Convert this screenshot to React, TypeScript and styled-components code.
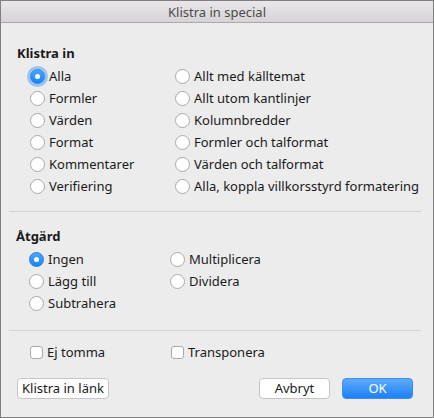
import React from "react";
import styled, { createGlobalStyle } from "styled-components";

const Global = createGlobalStyle`
  html, body { margin: 0; padding: 0; background: #ececec; }
  body { font-family: "Noto Sans", "Open Sans", "Liberation Sans", sans-serif; font-size: 13px; color: #1a1a1a; }
  * { box-sizing: border-box; }
`;

const Window = styled.div`
  width: 434px;
  height: 418px;
  border: 1px solid #7f7f7f;
  background: #ececec;
  display: flex;
  flex-direction: column;
`;

const TitleBar = styled.div`
  height: 22px;
  flex: none;
  border-bottom: 1px solid #a9a9a9;
  background: linear-gradient(#e9e7e9, #d5d3d5);
  display: flex;
  align-items: center;
  justify-content: center;
  color: #4a4a4a;
  font-size: 13px;
`;

const Body = styled.div`
  padding: 21px 12px 0 8px;
  display: flex;
  flex-direction: column;
`;

const Header = styled.div`
  font-weight: 700;
  font-size: 13px;
  line-height: 18px;
  padding-left: ${(p: { $indent: number }) => p.$indent}px;
`;

const Grid = styled.div<{ $left: number; $col: number }>`
  display: grid;
  grid-template-columns: ${(p) => p.$col}px 1fr;
  grid-auto-flow: column;
  padding-left: ${(p) => p.$left}px;
  margin-top: 3px;
`;

const Col = styled.div`
  display: flex;
  flex-direction: column;
`;

const Row = styled.label`
  height: 22px;
  display: flex;
  align-items: center;
  gap: 4px;
  white-space: nowrap;
`;

const Radio = styled.span<{ $on?: boolean; $focus?: boolean }>`
  width: 15px;
  height: 15px;
  border-radius: 50%;
  flex: none;
  display: flex;
  align-items: center;
  justify-content: center;
  background: ${(p) => (p.$on ? "linear-gradient(#4ea6fb, #1a84f6)" : "#fff")};
  border: 1px solid ${(p) => (p.$on ? "#1a7ef0" : "#a9a9a9")};
  box-shadow: ${(p) => (p.$focus ? "0 0 0 3px rgba(90,160,240,0.55)" : "none")};
  &::after {
    content: "";
    display: ${(p) => (p.$on ? "block" : "none")};
    width: 5px;
    height: 5px;
    border-radius: 50%;
    background: #fff;
  }
`;

const Separator = styled.div`
  height: 1px;
  background: #d3d3d3;
  margin: ${(p: { $top: number; $bottom: number }) => `${p.$top}px 0 ${p.$bottom}px 0`};
`;

const CheckGrid = styled.div`
  display: grid;
  grid-template-columns: 141px 1fr;
  padding-left: 21px;
`;

const Check = styled.span`
  width: 13px;
  height: 13px;
  border-radius: 3px;
  background: #fff;
  border: 1px solid #a9a9a9;
  flex: none;
`;

const Buttons = styled.div`
  display: flex;
  align-items: center;
  margin-top: 15px;
  padding-left: 8px;
  padding-right: 8px;
`;

const Button = styled.button<{ $primary?: boolean; $w: number }>`
  height: 21px;
  width: ${(p) => p.$w}px;
  padding: 0;
  font-family: inherit;
  font-size: 13px;
  border-radius: 4px;
  border: 1px solid ${(p) => (p.$primary ? "#3f8ff0" : "#c5c5c5")};
  background: ${(p) => (p.$primary ? "linear-gradient(#5eaafb, #1c80f6)" : "#fff")};
  color: ${(p) => (p.$primary ? "#fff" : "#1a1a1a")};
  line-height: 19px;
`;

const Spacer = styled.div`
  flex: 1;
`;

const ButtonGap = styled.div`
  width: 12px;
`;

type Opt = { label: string; on?: boolean; focus?: boolean };

function RadioCol({ items }: { items: Opt[] }) {
  return (
    <Col>
      {items.map((o) => (
        <Row key={o.label}>
          <Radio $on={o.on} $focus={o.focus} />
          {o.label}
        </Row>
      ))}
    </Col>
  );
}

export default function App() {
  return (
    <>
      <Global />
      <Window>
        <TitleBar>Klistra in special</TitleBar>
        <Body>
          <Header $indent={8}>Klistra in</Header>
          <Grid $left={21} $col={145}>
            <RadioCol
              items={[
                { label: "Alla", on: true, focus: true },
                { label: "Formler" },
                { label: "Värden" },
                { label: "Format" },
                { label: "Kommentarer" },
                { label: "Verifiering" },
              ]}
            />
            <RadioCol
              items={[
                { label: "Allt med källtemat" },
                { label: "Allt utom kantlinjer" },
                { label: "Kolumnbredder" },
                { label: "Formler och talformat" },
                { label: "Värden och talformat" },
                { label: "Alla, koppla villkorsstyrd formatering" },
              ]}
            />
          </Grid>
          <Separator $top={14} $bottom={15} />
          <Header $indent={7}>Åtgärd</Header>
          <Grid $left={20} $col={141}>
            <RadioCol
              items={[{ label: "Ingen", on: true }, { label: "Lägg till" }, { label: "Subtrahera" }]}
            />
            <RadioCol items={[{ label: "Multiplicera" }, { label: "Dividera" }]} />
          </Grid>
          <Separator $top={16} $bottom={10} />
          <CheckGrid>
            <Row>
              <Check />
              Ej tomma
            </Row>
            <Row>
              <Check />
              Transponera
            </Row>
          </CheckGrid>
          <Buttons>
            <Button $w={92}>Klistra in länk</Button>
            <Spacer />
            <Button $w={71}>Avbryt</Button>
            <ButtonGap />
            <Button $primary $w={71}>OK</Button>
          </Buttons>
        </Body>
      </Window>
    </>
  );
}
